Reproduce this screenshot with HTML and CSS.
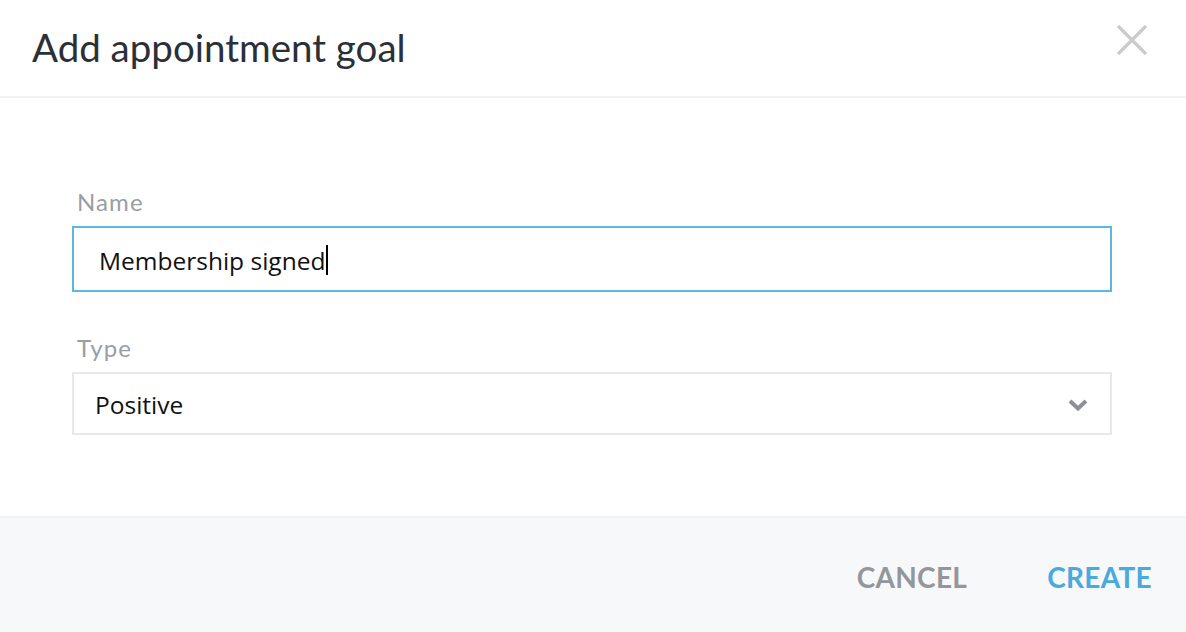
FILE: index.html
```html
<!DOCTYPE html>
<html>
<head>
<meta charset="utf-8">
<link rel="stylesheet" href="styles.css">
</head>
<body>
<div class="modal">
  <header class="modal-header">
    <h1 class="modal-title">Add appointment goal</h1>
    <button class="close-btn" aria-label="Close">
      <svg width="32" height="32" viewBox="0 0 32 32"><path d="M2 2 L30 30 M30 2 L2 30" stroke="#cbcbcb" stroke-width="3.2" fill="none"/></svg>
    </button>
  </header>
  <main class="modal-body">
    <div class="field">
      <label class="field-label">Name</label>
      <div class="input input-focus"><span class="input-text">Membership signed</span><span class="caret"></span></div>
    </div>
    <div class="field">
      <label class="field-label">Type</label>
      <div class="input select"><span class="select-text">Positive</span>
        <svg class="chevron" width="24" height="16" viewBox="0 0 24 16"><path d="M4 4 L12 11.5 L20 4" stroke="#8d9096" stroke-width="4" fill="none"/></svg>
      </div>
    </div>
  </main>
  <footer class="modal-footer">
    <button class="btn btn-cancel">CANCEL</button>
    <button class="btn btn-create">CREATE</button>
  </footer>
</div>
</body>
</html>
```
FILE: styles.css
```css
html, body { margin: 0; padding: 0; background: #fff; }
body { font-family: "Lato", "Open Sans", sans-serif; width: 1186px; height: 632px; overflow: hidden; }
.modal { display: flex; flex-direction: column; height: 632px; }
.modal-header {
  height: 98px; box-sizing: border-box; border-bottom: 2px solid #f1f2f3;
  display: flex; align-items: center; justify-content: space-between;
  padding: 0 38px 0 32px;
}
.modal-title { margin: 0; font-weight: 400; font-size: 38.5px; color: #2b3038; padding-bottom: 2px; }
.close-btn { background: none; border: 0; padding: 0; margin-top: -16px; display: flex; }
.modal-body { flex: 1; padding: 90px 74px 0 72px; }
.field { display: flex; flex-direction: column; margin-bottom: 42px; }
.field-label { font-size: 24px; letter-spacing: 1.1px; color: #9a9da2; margin-left: 5px; margin-bottom: 10px; line-height: 28px; }
.input {
  height: 66px; box-sizing: border-box; border: 2px solid #e8e8e8; display: flex; align-items: center;
}
.input-focus { border-color: #5ab7df; padding-left: 25px; padding-top: 2px; }
.input-text { font-family: "Open Sans", sans-serif; font-size: 24.5px; color: #111; }
.caret { width: 2px; height: 30px; background: #000; margin-left: 1px; }
.select { height: 63px; padding: 2px 20px 0 21px; justify-content: space-between; }
.select-text { font-family: "Open Sans", sans-serif; font-size: 24.5px; color: #111; }
.chevron { margin-top: 0; }
.modal-footer {
  height: 116px; background: #f7f8fa; border-top: 2px solid #f1f2f4; box-sizing: border-box;
  display: flex; justify-content: flex-end; align-items: center; gap: 80px; padding: 0 34px 0 0;
}
.btn { background: none; border: 0; padding: 0; font-family: "Lato", sans-serif; font-weight: 700; font-size: 28px; letter-spacing: 0.3px; margin-top: 4px; }
.btn-cancel { color: #94969b; }
.btn-create { color: #4aa9dd; }
```
